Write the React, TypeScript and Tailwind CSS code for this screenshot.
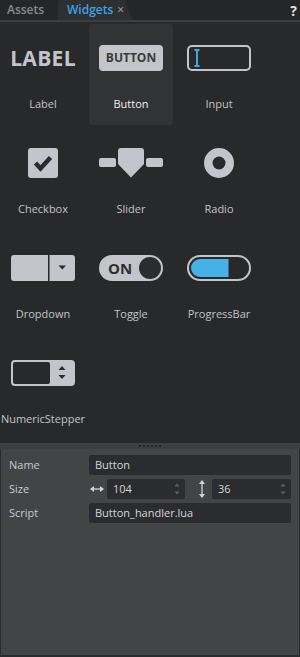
import clsx from 'clsx';
import type { ReactNode } from 'react';

const ICON = '#c4c5cb';
const BG = '#28292b';
const DARK = '#2b2c2e';
const BLUE = '#45b1e6';

const LabelIcon = () => (
  <span className="text-[21px] font-bold leading-none tracking-[0.3px] text-[#c4c5cb]">LABEL</span>
);

const ButtonIcon = () => (
  <div className="flex h-[26px] w-[64px] items-center justify-center rounded-[4px] bg-[#c4c5cb] text-[12px] font-bold leading-none text-[#3a3b3e]">
    BUTTON
  </div>
);

const InputIcon = () => (
  <svg width="64" height="26" viewBox="0 0 64 26">
    <rect width="64" height="26" rx="5" fill={ICON} />
    <rect x="2" y="2" width="60" height="22" rx="3" fill={BG} />
    <path d="M7.5 5H12.5M10 5V21M7.5 21H12.5" stroke="#3fa8e0" strokeWidth="2" fill="none" />
  </svg>
);

const CheckboxIcon = () => (
  <svg width="64" height="30" viewBox="0 0 64 30">
    <rect x="17" y="0" width="30" height="30" rx="3" fill={ICON} />
    <path d="M24.5 15 L29.5 20.5 L39.5 9.5" stroke="#2a2b2d" strokeWidth="4.5" fill="none" />
  </svg>
);

const SliderIcon = () => (
  <svg width="64" height="30" viewBox="0 0 64 30">
    <rect x="0" y="10" width="17" height="9" rx="2" fill={ICON} />
    <rect x="47" y="10" width="17" height="9" rx="2" fill={ICON} />
    <path d="M19 3 Q19 0 22 0 H42 Q45 0 45 3 V16 L32 29.5 L19 16 Z" fill={ICON} />
  </svg>
);

const RadioIcon = () => (
  <svg width="64" height="30" viewBox="0 0 64 30">
    <circle cx="32" cy="15" r="15" fill={ICON} />
    <circle cx="32" cy="15" r="6.5" fill={BG} />
  </svg>
);

const DropdownIcon = () => (
  <svg width="64" height="26" viewBox="0 0 64 26">
    <rect width="64" height="26" rx="3" fill={ICON} />
    <rect x="37" y="0" width="1.5" height="26" fill={BG} />
    <path d="M47.5 10.5 H55 L51.25 14.5 Z" fill="#2a2b2d" />
  </svg>
);

const ToggleIcon = () => (
  <div className="flex h-[26px] w-[64px] items-center rounded-full bg-[#c4c5cb] p-[2px]">
    <span className="ml-[7px] text-[15px] font-bold leading-none text-[#2e2f31]">ON</span>
    <span className="ml-auto h-[22px] w-[22px] rounded-full bg-[#2b2c2e]" />
  </div>
);

const ProgressIcon = () => (
  <svg width="64" height="26" viewBox="0 0 64 26">
    <rect width="64" height="26" rx="13" fill={ICON} />
    <rect x="2" y="2" width="60" height="22" rx="11" fill={BG} />
    <path d="M13 4 H41.5 V22 H13 A9 9 0 0 1 13 4 Z" fill={BLUE} />
  </svg>
);

const StepperIcon = () => (
  <svg width="64" height="26" viewBox="0 0 64 26">
    <rect width="64" height="26" rx="4" fill={ICON} />
    <rect x="2" y="2" width="37" height="22" rx="2" fill={BG} />
    <path d="M47.5 10 H54.5 L51 6 Z M47.5 15 H54.5 L51 19 Z" fill="#2a2b2d" />
  </svg>
);

const widgets: { name: string; icon: ReactNode }[] = [
  { name: 'Label', icon: <LabelIcon /> },
  { name: 'Button', icon: <ButtonIcon /> },
  { name: 'Input', icon: <InputIcon /> },
  { name: 'Checkbox', icon: <CheckboxIcon /> },
  { name: 'Slider', icon: <SliderIcon /> },
  { name: 'Radio', icon: <RadioIcon /> },
  { name: 'Dropdown', icon: <DropdownIcon /> },
  { name: 'Toggle', icon: <ToggleIcon /> },
  { name: 'ProgressBar', icon: <ProgressIcon /> },
  { name: 'NumericStepper', icon: <StepperIcon /> },
];

const WidgetCell = ({ name, icon, selected }: { name: string; icon: ReactNode; selected: boolean }) => (
  <div
    className={clsx(
      'flex h-[101px] w-[84px] flex-col items-center rounded-[3px] pt-[19px]',
      selected && 'bg-[#323335]'
    )}
  >
    <div className="flex h-[30px] w-[64px] items-center justify-center">{icon}</div>
    <span
      className={clsx(
        'mt-[23px] whitespace-nowrap text-[11px] leading-[15px]',
        selected ? 'text-[#f0f0f0]' : 'text-[#c3c4c6]'
      )}
    >
      {name}
    </span>
  </div>
);

const Spin = () => (
  <svg width="6" height="12" viewBox="0 0 6 12" className="ml-auto mr-[5px]">
    <path d="M0.5 3.5 H5.5 L3 0.5 Z M0.5 8.5 H5.5 L3 11.5 Z" fill="#5e5f62" />
  </svg>
);

const Field = ({ value, spin, className }: { value: string; spin?: boolean; className?: string }) => (
  <div
    className={clsx(
      'flex h-[20px] items-center rounded-[2px] bg-[#2b2c2e] pl-[6px] text-[11px] text-[#d6d6d8]',
      className
    )}
  >
    <span>{value}</span>
    {spin && <Spin />}
  </div>
);

const PropLabel = ({ children }: { children: string }) => (
  <span className="w-[88px] shrink-0 pl-[8px] text-[11px] text-[#c9cacc]">{children}</span>
);

export default function App() {
  return (
    <div className="flex h-[657px] w-[300px] flex-col bg-[#28292b] font-['Open_Sans',sans-serif]">
      {/* tabs */}
      <div className="flex h-[22px] shrink-0 items-end border-b-2 border-[#3d3e40] bg-[#252628]">
        <div className="flex h-[20px] w-[58px] items-center pl-[7px] text-[12px] font-semibold text-[#8a8b8e]">
          Assets
        </div>
        <div className="flex h-[20px] w-[74px] items-center rounded-tl-[3px] bg-[#2e2f31] pl-[9px] [clip-path:polygon(0_0,calc(100%-7px)_0,100%_100%,0_100%)]">
          <span className="text-[12px] font-semibold text-[#3aa5e4]">Widgets</span>
          <span className="ml-[4px] text-[12px] leading-none text-[#a8a9ac]">×</span>
        </div>
        <span className="ml-auto flex h-[20px] items-center pr-[3px] text-[14px] font-bold text-[#e2e2e4]">?</span>
      </div>

      {/* widget palette */}
      <div className="h-[421px] shrink-0 pl-[1px] pt-[2px]">
        <div className="grid grid-cols-[repeat(3,84px)] gap-[4px]">
          {widgets.map((w) => (
            <WidgetCell key={w.name} name={w.name} icon={w.icon} selected={w.name === 'Button'} />
          ))}
        </div>
      </div>

      {/* splitter */}
      <div className="flex h-[6px] shrink-0 items-center justify-center gap-[2px] bg-[#3d3e40]">
        {[0, 1, 2, 3, 4, 5].map((i) => (
          <span key={i} className="h-[2px] w-[2px] bg-[#232426]" />
        ))}
      </div>

      {/* properties */}
      <div className="flex flex-1 flex-col gap-[4px] border-x border-b-2 border-[#2a2b2d] bg-[#434446] pt-[6px]">
        <div className="flex items-center pr-[8px]">
          <PropLabel>Name</PropLabel>
          <Field value="Button" className="flex-1" />
        </div>
        <div className="flex items-center pr-[8px]">
          <PropLabel>Size</PropLabel>
          <svg width="14" height="8" viewBox="0 0 14 8" className="ml-[1px] shrink-0">
            <path d="M1 4 H13" stroke="#d2d3d5" strokeWidth="1.3" />
            <path d="M0 4 L4 1 V7 Z M14 4 L10 1 V7 Z" fill="#d2d3d5" />
          </svg>
          <Field value="104" spin className="ml-[3px] w-[78px] shrink-0" />
          <svg width="6" height="18" viewBox="0 0 6 18" className="ml-[14px] mr-[7px] shrink-0">
            <path d="M3 1 V17" stroke="#d2d3d5" strokeWidth="1.3" />
            <path d="M3 0 L0 4 H6 Z M3 18 L0 14 H6 Z" fill="#d2d3d5" />
          </svg>
          <Field value="36" spin className="flex-1" />
        </div>
        <div className="flex items-center pr-[8px]">
          <PropLabel>Script</PropLabel>
          <Field value="Button_handler.lua" className="flex-1" />
        </div>
      </div>
    </div>
  );
}
